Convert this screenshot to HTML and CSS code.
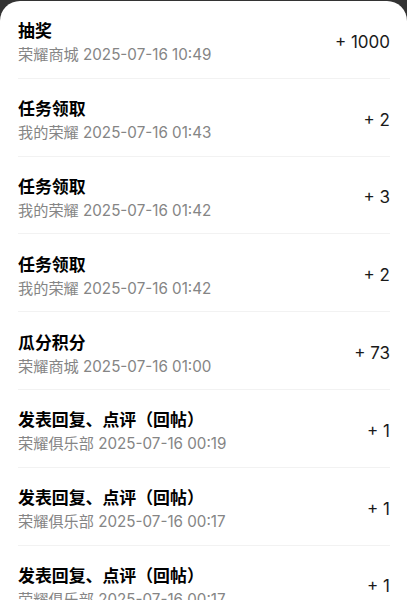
FILE: index.html
```html
<!DOCTYPE html>
<html lang="zh-CN">
<head>
<meta charset="utf-8">
<link rel="stylesheet" href="styles.css">
</head>
<body>
<div class="sheet">
  <div class="row"><div class="info"><div class="title">抽奖</div><div class="sub">荣耀商城 2025-07-16 10:49</div></div><div class="amount">+ 1000</div></div>
  <div class="row"><div class="info"><div class="title">任务领取</div><div class="sub">我的荣耀 2025-07-16 01:43</div></div><div class="amount">+ 2</div></div>
  <div class="row"><div class="info"><div class="title">任务领取</div><div class="sub">我的荣耀 2025-07-16 01:42</div></div><div class="amount">+ 3</div></div>
  <div class="row"><div class="info"><div class="title">任务领取</div><div class="sub">我的荣耀 2025-07-16 01:42</div></div><div class="amount">+ 2</div></div>
  <div class="row"><div class="info"><div class="title">瓜分积分</div><div class="sub">荣耀商城 2025-07-16 01:00</div></div><div class="amount">+ 73</div></div>
  <div class="row"><div class="info"><div class="title">发表回复、点评（回帖）</div><div class="sub">荣耀俱乐部 2025-07-16 00:19</div></div><div class="amount">+ 1</div></div>
  <div class="row"><div class="info"><div class="title">发表回复、点评（回帖）</div><div class="sub">荣耀俱乐部 2025-07-16 00:17</div></div><div class="amount">+ 1</div></div>
  <div class="row"><div class="info"><div class="title">发表回复、点评（回帖）</div><div class="sub">荣耀俱乐部 2025-07-16 00:17</div></div><div class="amount">+ 1</div></div>
</div>
</body>
</html>
```
FILE: styles.css
```css
html, body {
  margin: 0;
  padding: 0;
  background: #333333;
  height: 600px;
  overflow: hidden;
}
body {
  padding-top: 1px;
  font-family: Inter, "Noto Sans CJK SC", sans-serif;
}
.sheet {
  background: #ffffff;
  border-radius: 20px 20px 0 0;
  padding: 0 17px 0 18px;
  min-height: 620px;
}
.row {
  height: 77.8px;
  box-sizing: border-box;
  display: flex;
  align-items: center;
  justify-content: space-between;
  border-bottom: 1px solid #f2f2f2;
  padding-top: 6px;
}
.info {
  display: flex;
  flex-direction: column;
  gap: 5px;
}
.title {
  font-family: "Noto Sans CJK SC", sans-serif;
  font-size: 16.9px;
  font-weight: 700;
  color: #000000;
  line-height: 21px;
}
.sub {
  font-size: 15.2px;
  color: #858585;
  line-height: 20px;
}
.amount {
  font-size: 17px;
  color: #1a1a1a;
  line-height: 21px;
}
```
